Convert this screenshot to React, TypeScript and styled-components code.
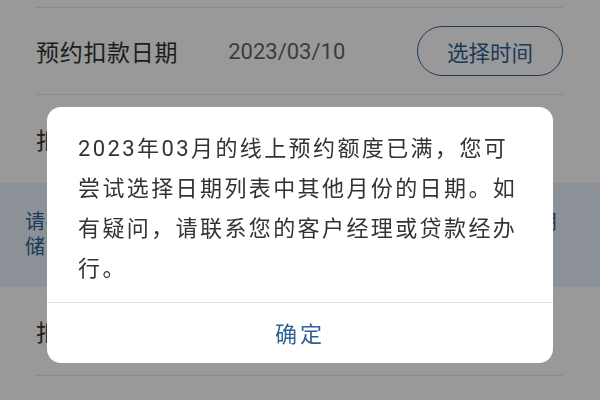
import React from 'react';
import styled, { createGlobalStyle, css } from 'styled-components';

const BLUE = '#2f6196';
const TEXT = '#333333';
const LINE = '#e6e6e6';

const GlobalStyle = createGlobalStyle`
  html, body {
    margin: 0;
    padding: 0;
    background: #ffffff;
  }
  body {
    font-family: Roboto, "Noto Sans CJK SC", "Noto Sans", sans-serif;
    color: ${TEXT};
    overflow: hidden;
  }
`

const Page = styled.div`
  width: 600px;
  height: 400px;
  padding-top: 7px;
  box-sizing: border-box;
  overflow: hidden;
`

const Row = styled.div<{ $height: number; $divided?: boolean }>`
  display: flex;
  align-items: center;
  margin: 0 37px 0 36px;
  height: ${p => p.$height}px;
  box-sizing: border-box;
  ${p => p.$divided && css`
    border-top: 1px solid ${LINE};
  `}
`

const Label = styled.span`
  flex: none;
  font-size: 23px;
  letter-spacing: 0.7px;
  color: ${TEXT};
`

const DateValue = styled.span`
  margin-left: 50px;
  font-size: 22px;
  color: #666666;
`

const PillButton = styled.button`
  margin-left: auto;
  width: 146px;
  height: 50px;
  border: 1.5px solid ${BLUE};
  border-radius: 25px;
  background: transparent;
  color: ${BLUE};
  font-family: inherit;
  font-size: 21.5px;
  padding: 0;
`

const Notice = styled.div`
  display: flex;
  align-items: center;
  height: 104px;
  padding: 0 25px;
  background: #e8f2fa;
  color: ${BLUE};
  font-size: 20px;
  line-height: 25px;
  letter-spacing: 0.5px;
  overflow: hidden;
`

const Overlay = styled.div`
  position: fixed;
  inset: 0;
  display: flex;
  justify-content: center;
  align-items: flex-start;
  padding-top: 107px;
  background: rgba(0, 0, 0, 0.4);
`

const Dialog = styled.div`
  width: 506px;
  background: #ffffff;
  border-radius: 14px;
  overflow: hidden;
`

const Message = styled.p`
  margin: 0;
  padding: 22px 31px 13px;
  font-size: 22px;
  line-height: 40px;
  letter-spacing: 2.4px;
  color: ${TEXT};
`

const Footer = styled.div`
  display: flex;
  align-items: center;
  justify-content: center;
  height: 61px;
  padding-bottom: 2px;
  box-sizing: border-box;
  border-top: 1px solid #e3e3e3;
`

const ConfirmButton = styled.button`
  border: none;
  background: none;
  padding: 0;
  font-family: inherit;
  font-size: 22px;
  letter-spacing: 3px;
  color: ${BLUE};
`

export default function App() {
  return (
    <>
      <GlobalStyle />
      <Page>
        <Row $height={87} $divided>
          <Label>预约扣款日期</Label>
          <DateValue>2023/03/10</DateValue>
          <PillButton>选择时间</PillButton>
        </Row>
        <Row $height={89} $divided>
          <Label>扣款账户</Label>
        </Row>
        <Notice>
          请在预约扣款日期前确保您的还款账户余额充足，如您使用储蓄卡还款，请留意卡片状态。
        </Notice>
        <Row $height={88}>
          <Label>扣款金额</Label>
        </Row>
        <Row $height={88} $divided />
      </Page>
      <Overlay>
        <Dialog>
          <Message>
            2023年03月的线上预约额度已满，您可尝试选择日期列表中其他月份的日期。如有疑问，请联系您的客户经理或贷款经办行。
          </Message>
          <Footer>
            <ConfirmButton>确定</ConfirmButton>
          </Footer>
        </Dialog>
      </Overlay>
    </>
  )
}
